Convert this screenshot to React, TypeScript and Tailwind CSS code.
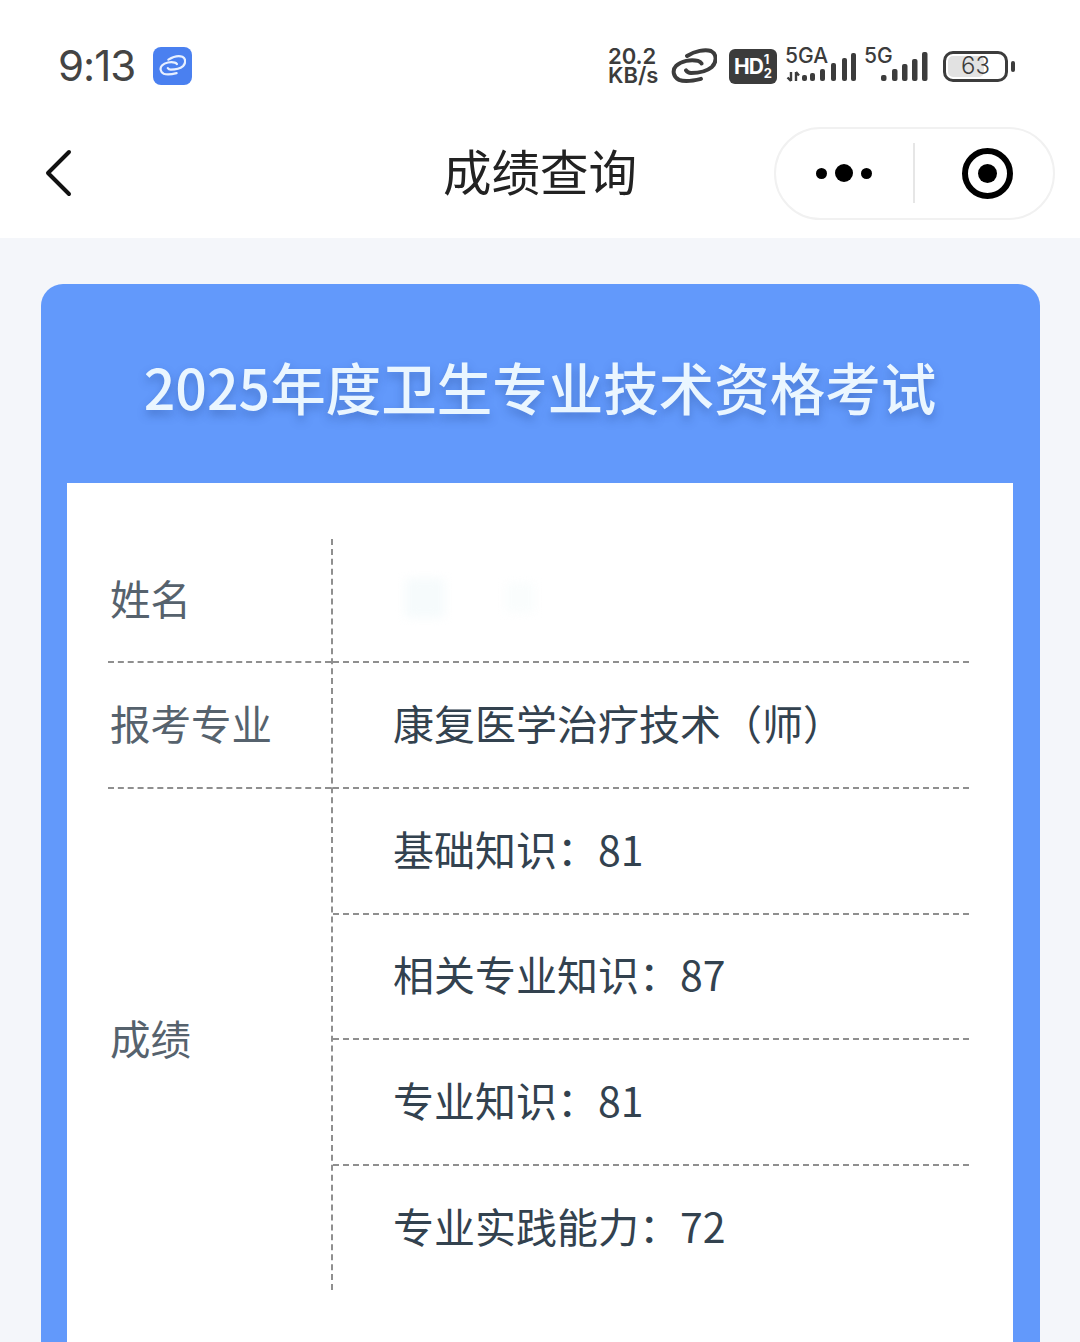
import React from "react";

const CJK = "font-['Noto_Sans_CJK_SC','Noto_Sans',sans-serif]";

function Link({ size, color, stroke }: { size: number; color: string; stroke: number }) {
  return (
    <svg width={size} height={size * 0.78} viewBox="0 0 46 36" fill="none" stroke={color} strokeWidth={stroke} strokeLinecap="round" strokeLinejoin="round">
      <path d="M30 31 C22 33 13 34 8 32 C2 29 1 22 5 18 C10 13 20 11 27 13 C29 13.6 30 14.5 30.5 15.5" />
      <path d="M16 8 C24 3 34 1 40 3 C46 6 46 14 41 19 C35 24 27 25 20 25 C18 25 16 24 15 22.5" />
    </svg>
  );
}

function Bars({ heights, xs, w }: { heights: number[]; xs: number[]; w: number }) {
  return (
    <>
      {heights.map((h, i) => (
        <rect key={i} x={xs[i]} y={30 - h} width={w} height={h} rx={2} fill="#3c3c3c" />
      ))}
    </>
  );
}

function StatusBar() {
  return (
    <div className="flex h-[108px] items-center justify-between pl-[58px] pr-[65px] pt-[24px]">
      <div className="flex items-center gap-[18px]">
        <span className="font-['Inter',sans-serif] text-[42px] leading-none tracking-[-1px] text-[#444444]">9:13</span>
        <div className="flex h-[38px] w-[39px] items-center justify-center rounded-[8px] bg-[#4a80f0]">
          <Link size={27} color="#e8f0ff" stroke={3.8} />
        </div>
      </div>
      <div className="flex items-center text-[#3c3c3c]">
        <div className="flex w-[52px] flex-col font-['Inter',sans-serif] text-[22px] font-semibold leading-[19px]">
          <span>20.2</span>
          <span>KB/s</span>
        </div>
        <div className="ml-[11px] flex items-center">
          <Link size={46} color="#3c3c3c" stroke={4} />
        </div>
        <div className="ml-[12px] flex h-[35px] w-[48px] items-center justify-center gap-[1px] rounded-[6px] bg-[#3c3c3c] font-['Inter',sans-serif] font-bold leading-none text-white">
          <span className="text-[21px] tracking-[-1px]">HD</span>
          <span className="flex flex-col text-[13px] leading-[14px]">
            <span>1</span>
            <span>2</span>
          </span>
        </div>
        <div className="relative ml-[8px] h-[38px] w-[72px]">
          <svg width="72" height="38" viewBox="0 0 72 38">
            <path d="M6 25v9M2.5 30.5L6 34M11 34v-9M11 25l3 3.5" stroke="#3c3c3c" strokeWidth="2.4" fill="none" />
            <g transform="translate(0 4)">
              <Bars heights={[6, 8, 12, 18, 23, 28]} xs={[17, 25, 35, 46, 57, 66]} w={5} />
            </g>
          </svg>
          <span className="absolute left-0 top-[-3px] font-['Inter',sans-serif] text-[21px] font-medium leading-[24px]">5GA</span>
        </div>
        <div className="relative ml-[7px] h-[38px] w-[64px]">
          <svg width="64" height="38" viewBox="0 0 64 38">
            <g transform="translate(0 4)">
              <Bars heights={[6, 12, 17, 22, 29]} xs={[17, 28, 38, 48, 58]} w={5.5} />
            </g>
          </svg>
          <span className="absolute left-0 top-[-3px] font-['Inter',sans-serif] text-[21px] font-medium leading-[24px]">5G</span>
        </div>
        <div className="ml-[15px] flex items-center">
          <div className="relative flex h-[31px] w-[65px] items-center justify-center rounded-[10px] border-[3px] border-[#3c3c3c]">
            <div className="absolute inset-y-[2px] left-[2px] w-[36px] rounded-[5px] bg-[#e2e2e2]" />
            <span className="relative font-['Inter',sans-serif] text-[24px] font-light leading-none text-[#3c3c3c]">63</span>
          </div>
          <div className="ml-[3px] h-[11px] w-[4px] rounded-[2px] bg-[#3c3c3c]" />
        </div>
      </div>
    </div>
  );
}

function NavBar() {
  return (
    <div className="grid h-[130px] grid-cols-[1fr_auto_1fr] items-center bg-white px-[25px]">
      <svg width="28" height="48" viewBox="0 0 28 48" fill="none" stroke="#111111" strokeWidth="4" strokeLinecap="round" strokeLinejoin="round" className="ml-[20px]">
        <path d="M24 3 L3 24 L24 45" />
      </svg>
      <h1 className={`${CJK} pb-[6px] text-[48.5px] font-normal leading-none text-[#222222]`}>成绩查询</h1>
      <div className="relative z-10 -ml-[60px] flex h-[93px] w-[281px] items-center justify-self-end rounded-full border-2 border-[#f1f1f1] bg-white">
        <div className="flex w-[137px] items-center justify-center gap-[8px] pr-[2px]">
          <div className="h-[11px] w-[11px] rounded-full bg-black" />
          <div className="h-[18px] w-[18px] rounded-full bg-black" />
          <div className="h-[11px] w-[11px] rounded-full bg-black" />
        </div>
        <div className="h-[60px] w-[2px] bg-[#e6e6e6]" />
        <div className="flex flex-1 items-center justify-center pl-[6px]">
          <div className="flex h-[51px] w-[51px] items-center justify-center rounded-full border-[6px] border-black">
            <div className="h-[19px] w-[19px] rounded-full bg-black" />
          </div>
        </div>
      </div>
    </div>
  );
}

const rightText = "text-[41px] leading-none text-[#33424f] pb-[5px]";
const leftText = "text-[40.5px] leading-none text-[#56626d] pb-[3px]";
const dash = "border-b-2 border-dashed border-[#8f8f8f]";

function Value({ children, last }: { children: React.ReactNode; last?: boolean }) {
  return (
    <div className={`flex h-[125.5px] items-center pl-[60px] ${last ? "" : dash} ${rightText}`}>{children}</div>
  );
}

export default function App() {
  return (
    <div className={`h-[1342px] w-[1080px] overflow-hidden bg-[#f4f6fa] ${CJK}`}>
      <div className="bg-white">
        <StatusBar />
        <NavBar />
      </div>
      <div className="ml-[41px] mr-[40px] mt-[46px] rounded-t-[22px] bg-[#6299fb] pl-[26px] pr-[27px]">
        <div className="flex h-[199px] items-center justify-center pt-[6px] text-[55.5px] font-medium leading-none text-[#eaf6ff] [text-shadow:0_5px_10px_rgba(30,60,130,0.35)]">
          2025年度卫生专业技术资格考试
        </div>
        <div className="h-[900px] bg-white pl-[41px] pr-[44px] pt-[56px]">
          <div className="flex">
            <div className="flex h-[751px] w-[225px] flex-none flex-col border-r-2 border-dashed border-[#8f8f8f]">
              <div className={`flex h-[124px] items-center pl-[2px] ${dash} ${leftText}`}>姓名</div>
              <div className={`flex h-[126px] items-center pl-[2px] ${dash} ${leftText}`}>报考专业</div>
              <div className={`flex flex-1 items-center pl-[2px] ${leftText}`}>成绩</div>
            </div>
            <div className="flex flex-1 flex-col">
              <div className={`flex h-[124px] items-center pl-[72px] pb-[4px] ${dash}`}>
                <div className="h-[40px] w-[40px] rounded-[6px] bg-[#f6fbfc] blur-[5px]" />
                <div className="ml-[60px] h-[30px] w-[30px] rounded-[6px] bg-[#fafdfd] blur-[5px]" />
              </div>
              <div className={`flex h-[126px] items-center pl-[60px] ${dash} ${rightText}`}>康复医学治疗技术（师）</div>
              <Value>基础知识：81</Value>
              <Value>相关专业知识：87</Value>
              <Value>专业知识：81</Value>
              <Value last>专业实践能力：72</Value>
            </div>
          </div>
        </div>
      </div>
    </div>
  );
}
